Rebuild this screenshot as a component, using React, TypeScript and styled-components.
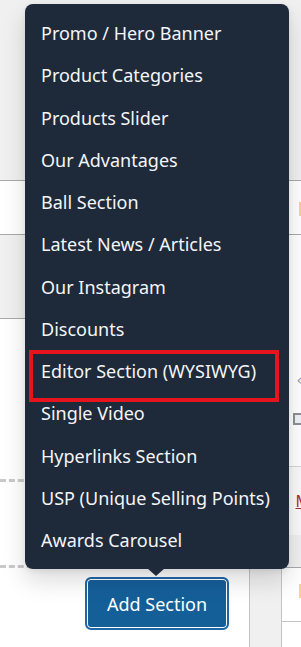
import React from "react";
import styled, { createGlobalStyle } from "styled-components";

const GlobalStyle = createGlobalStyle`
  html, body { margin: 0; padding: 0; background: #ffffff; }
  body { font-family: "Noto Sans", "Open Sans", sans-serif; }
  * { box-sizing: border-box; }
`;

const LINE = "#a7aaad";
const GREY = "#f0f0f1";

const Page = styled.div`
  position: relative;
  width: 301px;
  height: 647px;
  overflow: hidden;
  display: flex;
  flex-direction: column;
  background: #fff;
`;

const Band = styled.div<{ $h: number; $bg: string }>`
  height: ${(p) => p.$h}px;
  flex: none;
  background: ${(p) => p.$bg};
  border-bottom: 1px solid ${LINE};
  display: flex;
  justify-content: flex-end;
  align-items: flex-start;
`;

const YellowMark = styled.div<{ $top: number }>`
  width: 2px;
  height: 14px;
  margin-top: ${(p) => p.$top}px;
  background: #fcd28a;
`;

const Middle = styled.div`
  display: flex;
  flex: none;
  height: 333px;
`;

const LeftPane = styled.div`
  flex: 1;
  display: flex;
  flex-direction: column;
`;

const GreyRow = styled.div`
  height: 84px;
  background: ${GREY};
  border-bottom: 1px solid ${LINE};
`;

const DropArea = styled.div`
  flex: 1;
  padding-top: 160px;
  background: #fff;
`;

const DashedBox = styled.div`
  height: 89px;
  border-top: 3px dashed #c8c9cb;
  border-bottom: 3px dashed #c8c9cb;
`;

const RightPane = styled.div`
  width: 20px;
  display: flex;
  flex-direction: column;
`;

const RightWhite = styled.div`
  height: 232px;
  background: #fff;
  border-bottom: 1px solid #d6d7d9;
  display: flex;
  flex-direction: column;
  align-items: flex-end;
`;

const Chevron = styled.div`
  margin-top: 138px;
  margin-right: -1px;
  color: #8c8f94;
  font-size: 14px;
  line-height: 14px;
  font-family: "DejaVu Sans", sans-serif;
`;

const CheckBox = styled.div`
  margin-top: 26px;
  width: 8px;
  height: 12px;
  border: 2px solid #8c8f94;
  border-right: none;
  background: #eef2f7;
`;

const RightLight = styled.div`
  height: 68px;
  background: #f9f9f9;
  display: flex;
  justify-content: flex-end;
  align-items: center;
`;

const RedLink = styled.span`
  color: #b32d2e;
  font-size: 16px;
  line-height: 16px;
  text-decoration: underline;
  margin-right: -9px;
`;

const RightGrey = styled.div`
  flex: 1;
  background: ${GREY};
  border-bottom: 1px solid ${LINE};
`;

const Bottom = styled.div`
  flex: 1;
  display: flex;
`;

const ButtonArea = styled.div`
  width: 249px;
  padding-left: 85px;
  padding-top: 9px;
  background: #fff;
`;

const AddButton = styled.button`
  width: 144px;
  height: 53px;
  border-radius: 6px;
  border: 2px solid #1f67a8;
  background: #155f99;
  box-shadow: inset 0 0 0 1px #ffffff, inset 0 0 0 2px #155f99;
  color: #fff;
  font-family: "Noto Sans", "Open Sans", sans-serif;
  font-size: 18px;
  padding: 0;
  cursor: pointer;
`;

const GreyCol = styled.div`
  width: 32px;
  background: ${GREY};
  border-left: 1px solid #c3c4c7;
`;

const RightCell = styled.div`
  flex: 1;
  border-left: 1px solid #c3c4c7;
  display: flex;
  flex-direction: column;
  align-items: stretch;
`;

const RightCellTop = styled.div`
  height: 54px;
  border-bottom: 1px solid #c3c4c7;
  display: flex;
  justify-content: flex-end;
`;

const Menu = styled.div`
  position: absolute;
  left: 25px;
  top: 4px;
  width: 264px;
  padding: 8px 0;
  background: #1e2939;
  border-radius: 8px;
  box-shadow: 0 12px 24px rgba(0, 0, 0, 0.14), 0 2px 6px rgba(0, 0, 0, 0.08);
  &::after {
    content: "";
    position: absolute;
    left: 122px;
    bottom: -7px;
    border-left: 9px solid transparent;
    border-right: 9px solid transparent;
    border-top: 8px solid #1e2939;
  }
`;

const Item = styled.div<{ $marked?: boolean }>`
  position: relative;
  height: 42.25px;
  padding-left: 16px;
  display: flex;
  align-items: center;
  color: #f3f5f8;
  font-size: 18px;
  white-space: nowrap;
  ${(p) =>
    p.$marked
      ? `
    &::after {
      content: "";
      position: absolute;
      left: 4px;
      top: 0;
      width: 242px;
      height: 44px;
      border: 4px solid #e5141d;
    }
  `
      : ""}
`;

const items = [
  "Promo / Hero Banner",
  "Product Categories",
  "Products Slider",
  "Our Advantages",
  "Ball Section",
  "Latest News / Articles",
  "Our Instagram",
  "Discounts",
  "Editor Section (WYSIWYG)",
  "Single Video",
  "Hyperlinks Section",
  "USP (Unique Selling Points)",
  "Awards Carousel",
];

export default function App() {
  return (
    <>
      <GlobalStyle />
      <Page>
        <Band $h={181} $bg={GREY} />
        <Band $h={54} $bg="#fff">
          <YellowMark $top={21} />
        </Band>
        <Middle>
          <LeftPane>
            <GreyRow />
            <DropArea>
              <DashedBox />
            </DropArea>
          </LeftPane>
          <RightPane>
            <RightWhite>
              <Chevron>‹</Chevron>
              <CheckBox />
            </RightWhite>
            <RightLight>
              <RedLink>M</RedLink>
            </RightLight>
            <RightGrey />
          </RightPane>
        </Middle>
        <Bottom>
          <ButtonArea>
            <AddButton>Add Section</AddButton>
          </ButtonArea>
          <GreyCol />
          <RightCell>
            <RightCellTop>
              <YellowMark $top={16} />
            </RightCellTop>
          </RightCell>
        </Bottom>
        <Menu>
          {items.map((t) => (
            <Item key={t} $marked={t.startsWith("Editor")}>
              {t}
            </Item>
          ))}
        </Menu>
      </Page>
    </>
  );
}
